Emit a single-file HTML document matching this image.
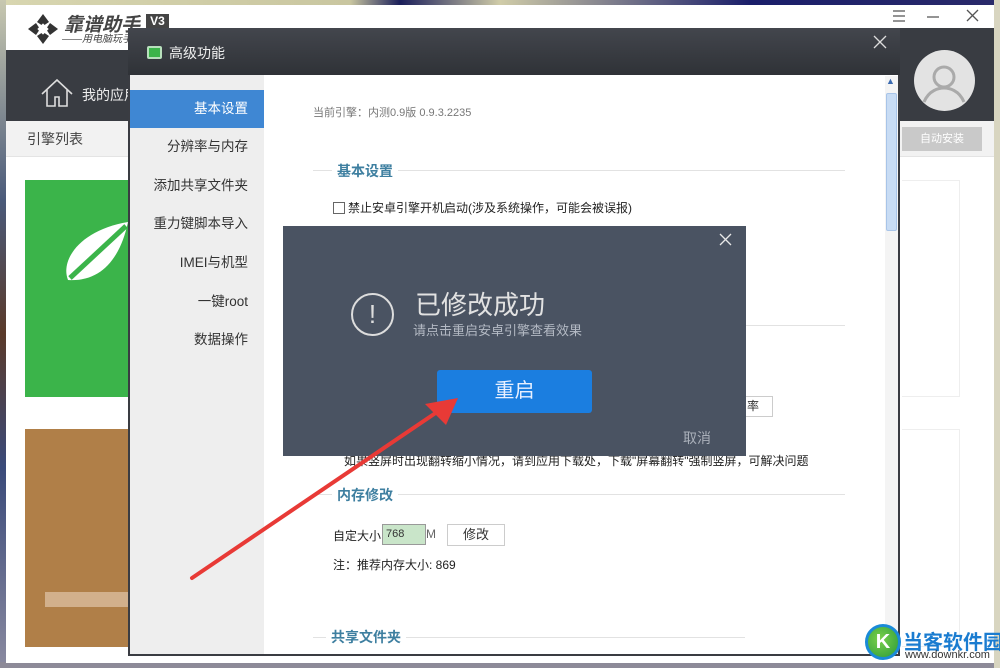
<!DOCTYPE html>
<html><head><meta charset="utf-8"><style>
*{margin:0;padding:0;box-sizing:border-box}
body{width:1000px;height:668px;overflow:hidden;position:relative;background:#6b6a80;font-family:"Liberation Sans","Noto Sans CJK SC",sans-serif;color:#333}
.a{position:absolute}
.t{white-space:nowrap}
.sb{position:absolute;left:130px;width:118px;text-align:right;font-size:13.5px;line-height:22px;color:#333}
</style></head><body>
<div class="a" style="left:0;top:0;width:1000px;height:6px;background:linear-gradient(90deg,#d8d6b0,#c9c6a0 35%,#1a1e5a 40%,#d0cca8 50%,#1a1e6a 75%,#2a2a6a 100%)"></div>
<div class="a" style="left:0;top:0;width:6px;height:668px;background:linear-gradient(#c8c8b0,#4a5a7a 30%,#5a3a2a 50%,#3a4a7a 70%,#8a8aa0)"></div>
<div class="a" style="left:0;top:662px;width:1000px;height:6px;background:#8d8a98"></div>
<div class="a" style="left:994px;top:0;width:6px;height:668px;background:#d8d5c0"></div>

<div class="a" style="left:6px;top:5px;width:988px;height:658px;background:#fff"></div>
<div class="a" style="left:6px;top:50px;width:988px;height:71px;background:#393c42"></div>
<div class="a" style="left:894px;top:28px;width:100px;height:93px;background:#393c42"></div>
<svg class="a" style="left:26px;top:12px" width="34" height="34" viewBox="0 0 34 34"><g fill="#333"><path d="M17 2l6 8-6 4-6-4z"/><path d="M32 17l-8 6-4-6 4-6z"/><path d="M17 32l-6-8 6-4 6 4z"/><path d="M2 17l8-6 4 6-4 6z"/></g><rect x="13" y="13" width="8" height="8" fill="#fff" transform="rotate(45 17 17)"/></svg>
<div class="a t" style="left:64px;top:10px;font-size:19px;font-style:italic;font-weight:bold;color:#444">靠谱助手</div>
<div class="a" style="left:146px;top:14px;width:23px;height:15px;background:#444;color:#fff;font-size:12px;font-weight:bold;text-align:center;line-height:15px">V3</div>
<div class="a t" style="left:62px;top:30px;font-size:10px;font-style:italic;color:#444">——用电脑玩手</div>
<svg class="a" style="left:890px;top:8px" width="90" height="16"><path d="M3 3h12M3 8h12M3 13h12M37 9h12M77 2l11 11M88 2L77 13" stroke="#555" stroke-width="1.3"/></svg>
<svg class="a" style="left:40px;top:78px" width="34" height="30"><path d="M2 16L17 2l15 14M7 12v16h8v-9h4v9h8V12" fill="none" stroke="#ddd" stroke-width="1.6"/></svg>
<div class="a t" style="left:82px;top:85px;font-size:14px;color:#eee">我的应用</div>
<div class="a" style="left:914px;top:50px;width:61px;height:61px;border-radius:50%;background:#e3e3e3;overflow:hidden"><svg width="61" height="61"><circle cx="30" cy="27" r="10" fill="none" stroke="#aaa" stroke-width="3"/><path d="M10 52c5-12 15-14 20-14s15 2 20 14" fill="none" stroke="#aaa" stroke-width="3"/></svg></div>
<div class="a" style="left:6px;top:121px;width:988px;height:36px;background:#f2f2f2;border-bottom:1px solid #e4e4e4"></div>
<div class="a t" style="left:27px;top:129px;font-size:14px;color:#444">引擎列表</div>
<div class="a" style="left:902px;top:127px;width:80px;height:24px;background:#c9c9c9;color:#fff;font-size:11px;text-align:center;line-height:24px">自动安装</div>
<div class="a" style="left:25px;top:180px;width:110px;height:217px;background:#3bb44a"></div>
<svg class="a" style="left:60px;top:220px" width="70" height="70"><path d="M8 60C0 40 20 10 68 2 60 40 40 62 8 60z" fill="#fff"/><path d="M10 58L66 6" stroke="#3bb44a" stroke-width="5"/></svg>
<div class="a" style="left:25px;top:429px;width:110px;height:218px;background:#b07f48"></div>
<div class="a" style="left:45px;top:592px;width:90px;height:15px;background:#d2b08c"></div>
<div class="a" style="left:902px;top:180px;width:58px;height:217px;border:1px solid #eee;border-left:none"></div>
<div class="a" style="left:902px;top:429px;width:58px;height:218px;border:1px solid #eee;border-left:none"></div>

<div class="a" style="left:128px;top:28px;width:772px;height:628px;background:#fff;border:2px solid #3a3c42"></div>
<div class="a" style="left:128px;top:28px;width:772px;height:47px;background:linear-gradient(#43464d,#2f3237)"></div>
<div class="a" style="left:147px;top:46px;width:15px;height:13px;background:#3cb44a;border-radius:2px;border:2px solid #b8e0bc"></div>
<div class="a t" style="left:169px;top:43px;font-size:14px;color:#eee">高级功能</div>
<svg class="a" style="left:873px;top:35px" width="14" height="14"><path d="M1 1l12 12M13 1L1 13" stroke="#ddd" stroke-width="1.3"/></svg>
<div class="a" style="left:130px;top:75px;width:134px;height:579px;background:#eeeeee"></div>
<div class="a" style="left:130px;top:90px;width:134px;height:38px;background:#3f87d3"></div>
<div class="sb" style="top:98px;color:#fff">基本设置</div>
<div class="sb" style="top:136px">分辨率与内存</div>
<div class="sb" style="top:175px">添加共享文件夹</div>
<div class="sb" style="top:213px">重力键脚本导入</div>
<div class="sb" style="top:252px">IMEI与机型</div>
<div class="sb" style="top:291px">一键root</div>
<div class="sb" style="top:329px">数据操作</div>
<div class="a" style="left:885px;top:76px;width:13px;height:578px;background:#f4f4f4"></div>
<div class="a" style="left:886px;top:93px;width:11px;height:138px;background:#c8dcf4;border:1px solid #a8c4e8;border-radius:2px"></div>
<div class="a t" style="left:886px;top:76px;font-size:9px;color:#3a6ab0">▲</div>
<div class="a t" style="left:313px;top:104px;font-size:11px;color:#777">当前引擎：内测0.9版 0.9.3.2235</div>
<div class="a" style="left:313px;top:170px;width:532px;height:1px;background:#e2e2e2"></div>
<div class="a t" style="left:332px;top:161px;padding:0 5px;background:#fff;font-size:14px;font-weight:bold;color:#3e7fa0">基本设置</div>
<div class="a" style="left:333px;top:202px;width:12px;height:12px;border:1px solid #666"></div>
<div class="a t" style="left:348px;top:199px;font-size:12px;color:#222">禁止安卓引擎开机启动(涉及系统操作，可能会被误报)</div>
<div class="a" style="left:740px;top:325px;width:105px;height:1px;background:#e2e2e2"></div>
<div class="a" style="left:730px;top:396px;width:43px;height:21px;border:1px solid #ccc;font-size:12px;line-height:19px;padding-left:16px">率</div>
<div class="a t" style="left:344px;top:452px;font-size:12px;color:#222">如果竖屏时出现翻转缩小情况，请到应用下载处，下载"屏幕翻转"强制竖屏，可解决问题</div>
<div class="a" style="left:313px;top:494px;width:532px;height:1px;background:#e2e2e2"></div>
<div class="a t" style="left:332px;top:485px;padding:0 5px;background:#fff;font-size:14px;font-weight:bold;color:#3e7fa0">内存修改</div>
<div class="a t" style="left:333px;top:527px;font-size:12px;color:#222">自定大小:</div>
<div class="a" style="left:382px;top:524px;width:44px;height:21px;background:#c9e5c9;border:1px solid #999;font-size:11px;line-height:19px;padding-left:3px">768</div>
<div class="a t" style="left:426px;top:527px;font-size:12px;color:#666">M</div>
<div class="a" style="left:447px;top:524px;width:58px;height:22px;border:1px solid #ccc;text-align:center;font-size:13px;line-height:20px">修改</div>
<div class="a t" style="left:333px;top:556px;font-size:12px;color:#222">注：推荐内存大小: 869</div>
<div class="a" style="left:313px;top:637px;width:432px;height:1px;background:#e2e2e2"></div>
<div class="a t" style="left:326px;top:627px;padding:0 5px;background:#fff;font-size:14px;font-weight:bold;color:#3e7fa0">共享文件夹</div>

<div class="a" style="left:283px;top:226px;width:463px;height:230px;background:#4a5362"></div>
<svg class="a" style="left:719px;top:233px" width="13" height="13"><path d="M1 1l11 11M12 1L1 12" stroke="#e8e8e8" stroke-width="1.3"/></svg>
<div class="a" style="left:351px;top:293px;width:43px;height:43px;border:2px solid #ddd;border-radius:50%;text-align:center;font-size:26px;line-height:38px;color:#ddd">!</div>
<div class="a t" style="left:415px;top:285px;font-size:26px;color:#e2e2e2">已修改成功</div>
<div class="a t" style="left:413px;top:320px;font-size:13px;color:#b4bac4">请点击重启安卓引擎查看效果</div>
<div class="a" style="left:437px;top:370px;width:155px;height:43px;background:#1b7ee0;border-radius:3px;text-align:center;font-size:20px;line-height:43px;color:#e8f0ff">重启</div>
<div class="a t" style="left:683px;top:428px;font-size:14px;color:#aab0ba">取消</div>

<svg class="a" style="left:0;top:0" width="1000" height="668"><path d="M192 578L440 410" stroke="#e83a36" stroke-width="4" stroke-linecap="round"/><path d="M458 398L425 404L446 425z" fill="#e83a36"/></svg>

<div class="a" style="left:865px;top:624px;width:36px;height:36px;border-radius:50%;background:radial-gradient(circle at 40% 40%,#7ad04a,#2a9a3a);border:3px solid #1a8ad8;color:#fff;font-weight:bold;font-size:20px;text-align:center;line-height:30px">K</div>
<div class="a t" style="left:903px;top:626px;font-size:20px;font-weight:bold;color:#1a7cd0">当客软件园</div>
<div class="a t" style="left:905px;top:649px;font-size:11px;color:#333">www.downkr.com</div>
</body></html>
